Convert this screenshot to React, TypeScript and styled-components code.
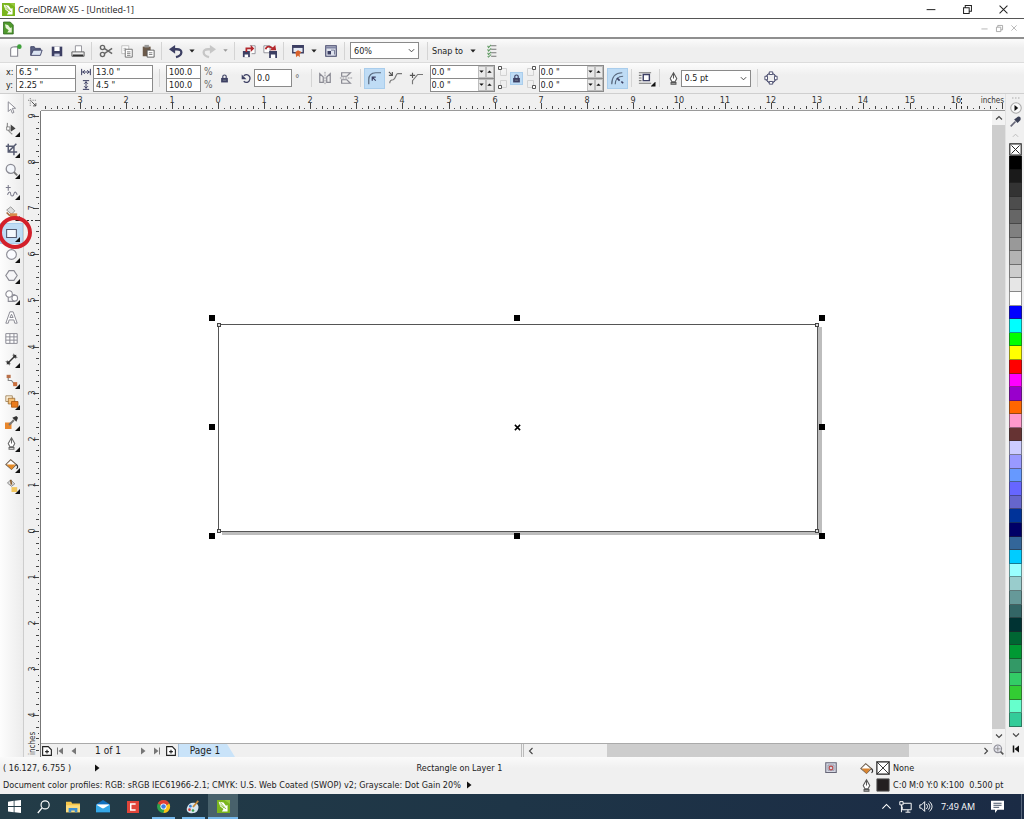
import React from "react";
import styled, { createGlobalStyle, css } from "styled-components";

const GlobalStyle = createGlobalStyle`
  * { box-sizing: border-box; }
  html, body { margin: 0; padding: 0; }
  body, button, input, select {
    font-family: "DejaVu Sans Condensed", "Noto Sans", "Liberation Sans", sans-serif;
    font-size: 9px;
    color: #222;
  }
  button { padding: 0; border: 0; background: none; }
`;

const INCH = 46.1;
const NAVY = "#3c3f63";
const GREY = "#8b8b94";

/* ---------- shared parts ---------- */

const Window = styled.div`
  display: flex;
  flex-direction: column;
  min-height: 100vh;
  background: #f0f0f0;
`;

const Glyph = styled.svg<{ $size?: number }>`
  display: block;
  flex: none;
  width: ${(p) => p.$size ?? 14}px;
  height: ${(p) => p.$size ?? 14}px;
  overflow: visible;
`;

type IconProps = { size?: number; children: React.ReactNode };
const Icon = ({ size, children }: IconProps) => (
  <Glyph $size={size} viewBox="0 0 16 16" fill="none" aria-hidden="true">
    {children}
  </Glyph>
);

const ToolButton = styled.button<{ $w?: number; $h?: number; $active?: boolean }>`
  position: relative;
  display: flex;
  flex: none;
  align-items: center;
  justify-content: center;
  width: ${(p) => p.$w ?? 21}px;
  height: ${(p) => p.$h ?? 21}px;
  ${(p) =>
    p.$active &&
    css`
      background: #bfdcf5;
      box-shadow: inset 0 0 0 1px #a9cdec;
    `}
`;

const Separator = styled.span<{ $w?: number }>`
  flex: none;
  width: 1px;
  height: 18px;
  margin: 0 ${(p) => p.$w ?? 3}px;
  background: #d4d4d4;
`;

const Caret = () => (
  <Icon size={6}>
    <path d="M1 4h14l-7 8z" fill="#222" />
  </Icon>
);

/* ---------- title and menu bars ---------- */

const TitleBar = styled.header`
  display: flex;
  align-items: center;
  height: 19px;
  padding: 0 16px 0 2px;
  gap: 3px;
  background: #fff;
  border-bottom: 1px solid #555;
`;

const Title = styled.h1`
  flex: 1;
  margin: 0;
  font-family: "Open Sans", "Noto Sans", sans-serif;
  font-size: 9px;
  font-weight: 400;
`;

const MenuBar = styled.div`
  display: flex;
  align-items: center;
  justify-content: space-between;
  height: 20px;
  padding: 0 7px 0 2px;
  background: #fff;
  border-bottom: 2px solid #8f8f8f;
`;

const WindowButtons = styled.div<{ $gap: number }>`
  display: flex;
  gap: ${(p) => p.$gap}px;
`;

const CorelLogo = ({ size }: { size: number }) => (
  <Icon size={size}>
    <path d="M0 0h16v16H0z" fill="#7ab51d" />
    <path d="M0 0h16v5L9 0z" fill="#97c93d" />
    <path d="M2 2l6 1 3 4 2-1v8H6l2-3-4-3z" fill="#fff" />
    <path d="M4 3l7 8M4 6l5 4" stroke="#7ab51d" />
  </Icon>
);

const DocLogo = () => (
  <Icon size={12}>
    <path d="M2 0h9l4 4v12H2z" fill="#4f9a2c" stroke="#2f6420" />
    <path d="M4 3l4 1 3 4 2-1v7H7l2-3-4-3z" fill="#e9f5d8" />
  </Icon>
);

const MinGlyph = ({ c = "#222", size = 10 }) => (
  <Icon size={size}><path d="M1 9h14" stroke={c} strokeWidth="1.6" /></Icon>
);
const RestoreGlyph = ({ c = "#222", size = 9 }) => (
  <Icon size={size}><path d="M1 5h10v10H1zM4 5V1h11v10h-4" stroke={c} strokeWidth="1.8" /></Icon>
);
const CloseGlyph = ({ c = "#222", size = 9 }) => (
  <Icon size={size}><path d="M1 1l14 14M15 1L1 15" stroke={c} strokeWidth="1.8" /></Icon>
);

/* ---------- standard toolbar ---------- */

const Toolbar = styled.div`
  display: flex;
  align-items: center;
  height: 24px;
  padding-left: 4px;
  background: linear-gradient(#fbfbfb, #efefef 40%);
  border-bottom: 1px solid #dcdcdc;
`;

const SelectBox = styled.div<{ $w: number }>`
  position: relative;
  flex: none;
  width: ${(p) => p.$w}px;
  select {
    display: block;
    width: 100%;
    height: 17px;
    padding: 0 3px;
    border: 1px solid #8a8a8a;
    border-radius: 0;
    background: #fff;
    appearance: none;
  }
  svg {
    position: absolute;
    top: 5px;
    right: 4px;
    pointer-events: none;
  }
`;

const Chevron = ({ turn = 0, size = 7, c = "#444" }) => (
  <Icon size={size}>
    <path d="M2 5l6 6 6-6" stroke={c} strokeWidth="2.2" transform={`rotate(${turn} 8 8)`} />
  </Icon>
);

const Select = ({ w, label, value }: { w: number; label: string; value: string }) => (
  <SelectBox $w={w}>
    <select aria-label={label} defaultValue={value}>
      <option>{value}</option>
    </select>
    <Chevron />
  </SelectBox>
);

const ZoomSlot = styled.div`
  margin: 0 5px 0 2px;
`;

const SnapButton = styled.button`
  display: flex;
  align-items: center;
  gap: 7px;
  margin: 0 5px 0 1px;
`;

const StandardToolbar = () => (
  <Toolbar role="toolbar" aria-label="Standard">
    <ToolButton aria-label="New">
      <Icon><path d="M3 14V6c0-3 4-3 8-3v11z" stroke={GREY} strokeWidth="1.3" fill="#fff" /><circle cx="13" cy="3" r="2.6" fill="#3fa13a" /></Icon>
    </ToolButton>
    <ToolButton aria-label="Open">
      <Icon><path d="M2 13V3h4l1 2h6v2" fill="#5d6485" stroke={NAVY} /><path d="M2 13l3-6h10l-2 6z" fill="#dbe4f2" stroke={NAVY} /></Icon>
    </ToolButton>
    <ToolButton aria-label="Save">
      <Icon><path d="M2 3h12v11H2z" fill={NAVY} /><path d="M5 3h6v5H5z" fill="#fff" /><path d="M5 11h6v3H5z" fill="#c7cce0" /></Icon>
    </ToolButton>
    <ToolButton aria-label="Print">
      <Icon><path d="M5 9V2h7v7" fill="#fff" stroke={GREY} /><path d="M1 9h14v5H1z" fill="#eee" stroke="#555" /><path d="M2 13h12" stroke="#333" strokeWidth="2" /></Icon>
    </ToolButton>
    <Separator />
    <ToolButton aria-label="Cut">
      <Icon><circle cx="4" cy="4" r="2.4" stroke="#666" strokeWidth="1.6" /><circle cx="4" cy="12" r="2.4" stroke="#666" strokeWidth="1.6" /><path d="M6 5l9 6M6 11l9-6" stroke="#666" strokeWidth="1.6" /></Icon>
    </ToolButton>
    <ToolButton aria-label="Copy">
      <Icon><path d="M2 2h8v9H2z" fill="#fff" stroke="#bbb" /><path d="M4 5h3M4 7h2" stroke="#aaa" /><path d="M6 6h8v9H6z" fill="#fff" stroke="#666" /><path d="M8 9h4M8 11h4M8 13h4" stroke="#777" /></Icon>
    </ToolButton>
    <ToolButton aria-label="Paste">
      <Icon><path d="M2 3h9v11H2z" fill="#6b5a4a" /><path d="M4 1h5v3H4z" fill="#999" /><path d="M7 7h8v8H7z" fill="#fff" stroke="#555" /><path d="M9 10h4M9 12h4" stroke="#777" /></Icon>
    </ToolButton>
    <Separator />
    <ToolButton aria-label="Undo">
      <Icon><path d="M8 15c8-2 8-9 1-9H4" stroke={NAVY} strokeWidth="2.6" /><path d="M7 1v10L0 6z" fill={NAVY} /></Icon>
    </ToolButton>
    <ToolButton $w={12} aria-label="Undo list"><Caret /></ToolButton>
    <ToolButton aria-label="Redo">
      <Icon><path d="M8 15C0 13 0 6 7 6h5" stroke="#c6c6c6" strokeWidth="2.6" /><path d="M9 1v10l7-5z" fill="#c6c6c6" /></Icon>
    </ToolButton>
    <ToolButton $w={12} aria-label="Redo list">
      <Icon size={5}><path d="M1 4h14l-7 8z" fill="#999" /></Icon>
    </ToolButton>
    <Separator />
    <ToolButton aria-label="Import">
      <Icon><path d="M9 2h6v9h-4" fill="#fff" stroke={GREY} /><path d="M1 8h8v7H1z" fill={NAVY} /><path d="M3 12h4v3H3z" fill="#fff" /><path d="M5 9V5h6" stroke="#b3282d" strokeWidth="2" /><path d="M10 1v8l4-4z" fill="#b3282d" /></Icon>
    </ToolButton>
    <ToolButton aria-label="Export">
      <Icon><path d="M1 2h7v8H1z" fill="#fff" stroke={GREY} /><path d="M7 8h9v8H7z" fill={NAVY} /><path d="M9 12h5v4H9z" fill="#fff" /><path d="M3 6c1-4 5-4 8-1" stroke="#b3282d" strokeWidth="2" /><path d="M8 7h7l-1-6z" fill="#b3282d" /></Icon>
    </ToolButton>
    <Separator />
    <ToolButton aria-label="Application launcher">
      <Icon><path d="M2 2h12v8H2z" fill="#e6ebf5" stroke={NAVY} strokeWidth="1.6" /><path d="M2 3h12" stroke={NAVY} strokeWidth="3" /><path d="M5 9l3-2 4 2-2 2v4l-2-2-2 2z" fill="#d9622b" /></Icon>
    </ToolButton>
    <ToolButton $w={12} aria-label="Launcher list"><Caret /></ToolButton>
    <ToolButton aria-label="Welcome screen">
      <Icon><path d="M2 2h12v12H2z" fill="#dfe3ee" stroke={NAVY} strokeWidth="1.2" /><path d="M2 4h12" stroke="#8287a5" strokeWidth="2.4" /><path d="M4 8h4v4H4z" fill={NAVY} /><path d="M8 7h4v5" stroke="#6d7290" /></Icon>
    </ToolButton>
    <Separator />
    <ZoomSlot><Select w={69} label="Zoom level" value="60%" /></ZoomSlot>
    <Separator />
    <SnapButton>Snap to <Caret /></SnapButton>
    <ToolButton aria-label="Options">
      <Icon><path d="M7 2h6M7 6h6M7 10h6M7 14h6" stroke="#777" strokeWidth="1.3" /><path d="M3 2l1 2 3-3M3 6l1 2 3-3M3 10l1 2 3-3M3 14l1 1 3-3" stroke="#5f9a62" strokeWidth="1.2" /></Icon>
    </ToolButton>
  </Toolbar>
);

/* ---------- property bar ---------- */

const PropertyBar = styled.div`
  display: flex;
  align-items: center;
  height: 31px;
  padding-left: 6px;
  background: linear-gradient(#fcfcfc, #efefef 40%);
  border-bottom: 1px solid #cfcfcf;
`;

const PairGrid = styled.div<{ $lead: number; $field: number; $tail?: number }>`
  display: grid;
  flex: none;
  grid-template-columns: ${(p) => p.$lead}px ${(p) => p.$field}px ${(p) => p.$tail ?? 0}px;
  grid-auto-rows: 13px;
  align-items: center;
  label { display: contents; }
`;

const Field = styled.input<{ $h?: number }>`
  width: 100%;
  height: ${(p) => p.$h ?? 14}px;
  padding: 0 2px;
  border: 1px solid #8a8a8a;
  border-radius: 0;
  background: #fff;
`;

const Unit = styled.span`
  padding-left: 3px;
  font-size: 10px;
  color: #666;
`;

const SpinStack = styled.div`
  display: grid;
  flex: none;
  width: 65px;
  grid-auto-rows: 12px;
  border: 1px solid #8a8a8a;
  background: #8a8a8a;
  gap: 1px;
`;

const SpinRow = styled.div`
  display: grid;
  grid-template-columns: 1fr 8px 8px;
  background: #fff;
  input {
    width: 100%;
    min-width: 0;
    height: 12px;
    padding: 0 1px;
    border: 0;
    background: transparent;
  }
  button {
    display: flex;
    align-items: center;
    justify-content: center;
    background: #e9e9e9;
    box-shadow: inset 0 0 0 1px #bdbdbd;
  }
`;

const Spinner = ({ label }: { label: string }) => (
  <SpinRow>
    <input aria-label={label} defaultValue={'0.0 "'} />
    <button aria-label={`Decrease ${label}`}><Icon size={5}><path d="M1 5h14l-7 7z" fill="#111" /></Icon></button>
    <button aria-label={`Increase ${label}`}><Icon size={5}><path d="M1 12h14L8 5z" fill="#111" /></Icon></button>
  </SpinRow>
);

const Gap = styled.span<{ $w: number }>`
  flex: none;
  width: ${(p) => p.$w}px;
`;

const DegreeBox = styled.div`
  flex: none;
  width: 38px;
`;

const LockGlyph = ({ size = 10 }) => (
  <Icon size={size}><path d="M5 8V4c0-3 6-3 6 0v4" stroke={NAVY} strokeWidth="2" /><path d="M2 7h12v8H2z" fill={NAVY} /><path d="M5 11h6" stroke="#9aa" strokeWidth="1" /></Icon>
);

const CornerGlyph = styled.svg`
  display: block;
  flex: none;
  width: 10px;
  height: 26px;
`;

const FlyMark = styled.span<{ $inset?: number }>`
  position: absolute;
  right: ${(p) => p.$inset ?? 0}px;
  bottom: 2px;
  width: 5px;
  height: 5px;
  background: #111;
  clip-path: polygon(100% 0, 100% 100%, 0 100%);
`;

const PenGlyph = () => (
  <Icon size={13}><path d="M8 1l4 7-2 4H6L4 8z" fill="#fff" stroke="#555" strokeWidth="1.3" /><path d="M8 2v6M5 13h6v2H5z" stroke="#555" strokeWidth="1.3" fill="#aaa" /></Icon>
);

const ObjectProperties = () => (
  <PropertyBar role="toolbar" aria-label="Property bar">
    <PairGrid $lead={10} $field={60}>
      <label><span>x:</span><Field defaultValue={'6.5 "'} /><i /></label>
      <label><span>y:</span><Field defaultValue={'2.25 "'} /><i /></label>
    </PairGrid>
    <Gap $w={5} />
    <PairGrid $lead={12} $field={60}>
      <Icon size={10}><path d="M1 3v10M15 3v10M2 8h12M6 5L3 8l3 3M10 5l3 3-3 3" stroke={NAVY} strokeWidth="1.6" /></Icon>
      <Field aria-label="Width" defaultValue={'13.0 "'} /><i />
      <Icon size={10}><path d="M3 1h10M3 15h10M8 2v12M5 6l3-3 3 3M5 10l3 3 3-3" stroke={NAVY} strokeWidth="1.6" /></Icon>
      <Field aria-label="Height" defaultValue={'4.5 "'} /><i />
    </PairGrid>
    <Separator $w={6} />
    <PairGrid $lead={0} $field={35} $tail={14}>
      <i /><Field aria-label="Horizontal scale" defaultValue="100.0" /><Unit>%</Unit>
      <i /><Field aria-label="Vertical scale" defaultValue="100.0" /><Unit>%</Unit>
    </PairGrid>
    <ToolButton $w={19} aria-label="Lock ratio"><LockGlyph size={9} /></ToolButton>
    <Gap $w={7} />
    <Icon size={11}><path d="M4 4c5-4 10 0 9 5s-6 6-9 3" stroke={NAVY} strokeWidth="1.8" /><path d="M1 2v7h7z" fill={NAVY} /></Icon>
    <Gap $w={2} />
    <DegreeBox><Field $h={18} aria-label="Angle of rotation" defaultValue="0.0" /></DegreeBox>
    <Unit>°</Unit>
    <Gap $w={8} />
    <Separator />
    <ToolButton aria-label="Mirror horizontally">
      <Icon><path d="M8 1v14" stroke={GREY} strokeDasharray="2 1" /><path d="M2 3l4 4v6H2zM14 3l-4 4v6h4z" stroke={GREY} strokeWidth="1.4" /></Icon>
    </ToolButton>
    <ToolButton aria-label="Mirror vertically">
      <Icon><path d="M1 8h14" stroke={GREY} strokeDasharray="2 1" /><path d="M3 2h10l-4 4H3zM3 14h10l-4-4H3z" stroke={GREY} strokeWidth="1.4" /></Icon>
    </ToolButton>
    <Separator />
    <ToolButton $active aria-label="Round corner">
      <Icon><path d="M2 15V10C2 5 5 2 10 2h6" stroke="#5b6b80" strokeWidth="1.4" /><path d="M10 11L6 7M6 11V7h4" stroke={NAVY} strokeWidth="1.4" /></Icon>
    </ToolButton>
    <ToolButton aria-label="Scalloped corner">
      <Icon><path d="M2 14c0-3 1-4 4-4 3-1 3-7 5-7h5" stroke="#777" strokeWidth="1.3" /><path d="M1 1l4 4M5 1v4H1" stroke="#555" strokeWidth="1.3" /></Icon>
    </ToolButton>
    <ToolButton aria-label="Chamfered corner">
      <Icon><path d="M4 15V11l6-7h6" stroke="#777" strokeWidth="1.3" /><path d="M4 2v6M1 5h6" stroke="#555" strokeWidth="1.3" /></Icon>
    </ToolButton>
    <Gap $w={3} />
    <SpinStack><Spinner label="top left radius" /><Spinner label="bottom left radius" /></SpinStack>
    <Gap $w={2} />
    <CornerGlyph viewBox="0 0 10 26" fill="none" aria-hidden="true">
      <path d="M3.500 3.500h6v7h-6zM3.500 15.500h6v7h-6z" stroke="#d2d2d2" />
      <path d="M1.500 1.500h3v3h-3zM1.500 20.500h3v3h-3z" stroke="#555" fill="#fff" />
    </CornerGlyph>
    <Gap $w={3} />
    <ToolButton $w={13} $h={13} $active aria-label="Edit corners together"><LockGlyph size={9} /></ToolButton>
    <Gap $w={4} />
    <CornerGlyph viewBox="0 0 10 26" fill="none" aria-hidden="true">
      <path d="M.5 3.500h6v7h-6zM.5 15.500h6v7h-6z" stroke="#d2d2d2" />
      <path d="M5.500 1.500h3v3h-3zM5.500 20.500h3v3h-3z" stroke="#555" fill="#fff" />
    </CornerGlyph>
    <Gap $w={2} />
    <SpinStack><Spinner label="top right radius" /><Spinner label="bottom right radius" /></SpinStack>
    <Gap $w={3} />
    <ToolButton $active aria-label="Relative corner scaling">
      <Icon><path d="M2 15C2 7 6 2 14 2M6 15c0-5 3-9 9-9" stroke="#5b6b80" strokeWidth="1.4" /><path d="M8 8l3 3M13 12l2 2" stroke={NAVY} strokeWidth="2" /></Icon>
    </ToolButton>
    <Separator />
    <ToolButton aria-label="Wrap text">
      <Icon><path d="M1 2h14M1 5h3M1 8h3M1 11h3M1 14h14" stroke="#777" strokeWidth="1.4" /><path d="M6 4h7v7H6z" stroke={NAVY} strokeWidth="1.6" fill="#fff" /></Icon>
      <FlyMark />
    </ToolButton>
    <Separator />
    <Gap $w={4} />
    <PenGlyph />
    <Gap $w={1} />
    <Select w={70} label="Outline width" value="0.5 pt" />
    <Gap $w={3} />
    <Separator />
    <ToolButton aria-label="Convert to curves">
      <Icon><circle cx="8" cy="8" r="5.5" stroke={NAVY} strokeWidth="1.2" /><path d="M6 1h4v3H6zM6 12h4v3H6zM1 6h3v4H1zM12 6h3v4h-3z" fill="#fff" stroke={NAVY} /></Icon>
    </ToolButton>
  </PropertyBar>
);

/* ---------- toolbox ---------- */

const Body = styled.main`
  display: flex;
  flex: 1;
  min-height: 0;
`;

const Toolbox = styled.nav`
  display: flex;
  flex: none;
  flex-direction: column;
  width: 24px;
  padding-top: 3px;
  background: linear-gradient(90deg, #fdfdfd, #ececec);
  border-right: 1px solid #cdcdcd;
`;

const RedRing = styled.span`
  position: absolute;
  z-index: 2;
  top: -7px;
  left: -2px;
  width: 34px;
  height: 33px;
  border: 4px solid #d3202b;
  border-radius: 50%;
`;

const tools: { name: string; fly?: boolean; art: React.ReactNode }[] = [
  { name: "Pick", art: <path d="M4 1v12l3-3 2 5 2-1-2-5h4z" fill="#fff" stroke={GREY} strokeWidth="1.2" /> },
  { name: "Shape", fly: true, art: <><path d="M3 1c-1 6 1 11 6 14" stroke="#8c8c8c" strokeWidth="1.4" /><path d="M2 6h4v4H2z" fill="#fff" stroke="#777" /><path d="M7 3v9l6-4z" fill="#444" /></> },
  { name: "Crop", fly: true, art: <path d="M4 1v10h11M1 4h10v11M14 1L5 10" stroke="#555a70" strokeWidth="1.8" /> },
  { name: "Zoom", fly: true, art: <><circle cx="7" cy="6" r="5.500" fill="#f3f6fb" stroke={GREY} strokeWidth="1.6" /><path d="M11 10l4 4" stroke="#777" strokeWidth="2.4" /></> },
  { name: "Freehand", fly: true, art: <path d="M4 0v7M1 3h6M3 12c2-5 4-4 4-1s3 4 4 0 3-2 4 1" stroke="#7c7c8c" strokeWidth="1.3" /> },
  { name: "Smart fill", fly: true, art: <><path d="M2 5l5-4 5 5-4 4z" fill="#ddd" stroke="#888" /><path d="M6 9h9v6H6z" fill="#d98b4c" /><path d="M2 8l4 4" stroke="#a1643a" strokeWidth="2" /></> },
  { name: "Rectangle", fly: true, art: <path d="M2 3h12v10H2z" fill="#f4f8fd" stroke="#555a70" strokeWidth="1.3" /> },
  { name: "Ellipse", fly: true, art: <circle cx="8" cy="8" r="6" fill="#fafbff" stroke={GREY} strokeWidth="1.4" /> },
  { name: "Polygon", fly: true, art: <path d="M5 2h6l4 6-4 6H5L1 8z" fill="#f6f6f8" stroke={GREY} strokeWidth="1.4" /> },
  { name: "Basic shapes", fly: true, art: <><path d="M4 6h8v8H4z" fill="#f6f6f8" stroke={GREY} strokeWidth="1.3" /><circle cx="5" cy="5" r="4" fill="#fff" stroke={GREY} strokeWidth="1.3" /><circle cx="12" cy="10" r="3.5" fill="#fff" stroke={GREY} strokeWidth="1.3" /></> },
  { name: "Text", art: <path d="M1 15L6 1h4l5 14h-3l-1-4H5l-1 4zM6 8h4L8 4z" fill="#fff" stroke={GREY} strokeWidth="1.2" /> },
  { name: "Table", art: <path d="M1 2h14v12H1zM1 6h14M1 10h14M6 2v12M11 2v12" fill="#fff" stroke={GREY} strokeWidth="1.2" /> },
  { name: "Dimension", fly: true, art: <><path d="M4 12l8-8" stroke="#333" strokeWidth="1.8" /><path d="M1 10l5 5M10 1l5 5" stroke="#777" strokeWidth="1.4" /><path d="M2 14l1-5 4 4zM14 2l-1 5-4-4z" fill="#333" /></> },
  { name: "Connector", fly: true, art: <><path d="M4 4v4h4l4 5" stroke="#888" strokeWidth="1.4" /><path d="M2 1h5v4H2z" fill="#b9704a" /><path d="M10 10h5v5h-5z" fill="#c96e3c" /></> },
  { name: "Blend", fly: true, art: <><path d="M1 1h8v7H1z" fill="#fff4df" stroke="#9a7b50" /><path d="M4 4h8v7H4z" fill="#f5c27a" stroke="#9a6a30" /><path d="M8 8h8v7H8z" fill="#e97b1c" stroke="#a9540c" /></> },
  { name: "Eyedropper", fly: true, art: <><path d="M0 8h8v8H0z" fill="#e8872d" /><path d="M5 11l6-6" stroke="#777" strokeWidth="2.4" /><path d="M9 2l5 5 2-5-2-2z" fill="#333" /></> },
  { name: "Outline", fly: true, art: <><path d="M8 1l4 7-2 4H6L4 8z" fill="#fff" stroke="#666" strokeWidth="1.3" /><path d="M8 2v6M5 13h6v2H5z" stroke="#666" strokeWidth="1.3" /></> },
  { name: "Fill", fly: true, art: <><path d="M1 8l6-6 7 6-6 6z" fill="#fff" stroke="#6b5a4a" strokeWidth="1.3" /><path d="M2 8h11l-5 6z" fill="#e58a25" /><path d="M14 8c3 3 1 5 0 5" stroke="#333" strokeWidth="1.5" /></> },
  { name: "Interactive fill", fly: true, art: <><path d="M3 5l4-4 5 5-4 3z" fill="#ddd" stroke="#777" /><path d="M7 1l1 6" stroke="#8a5c2c" strokeWidth="2" /><path d="M8 10h7v6H8z" fill="#f2c65d" /></> },
];

/* ---------- rulers and drawing area ---------- */

const WorkArea = styled.section`
  display: grid;
  flex: 1;
  min-width: 0;
  grid-template-columns: 17px 1fr 13px;
  grid-template-rows: 17px 1fr 14px;
`;

const RulerCorner = styled.div`
  display: flex;
  align-items: center;
  justify-content: center;
`;

const HorizontalRuler = styled.svg`
  grid-column: 2 / 4;
  display: block;
  width: 100%;
  height: 17px;
`;

const VerticalRuler = styled.svg`
  grid-row: 2 / 4;
  display: block;
  width: 17px;
  height: 100%;
  min-height: 0;
  contain: size;
`;

const rulerSteps = (from: number, to: number) =>
  Array.from({ length: (to - from) * 8 + 1 }, (_, i) => from * 8 + i);

const tickLength = (n: number) => (n % 8 === 0 ? 6 : n % 2 === 0 ? 3 : 1);

const TopRuler = () => (
  <HorizontalRuler aria-hidden="true">
    <svg x="50%" overflow="visible">
      {rulerSteps(-4, 17).map((n) => {
        const x = Math.round((n / 8) * INCH) - 305;
        return (
          <g key={n}>
            <rect x={x} y={15 - tickLength(n)} width="1" height={tickLength(n)} fill="#444" />
            {n % 8 === 0 && n > -32 && n < 130 && (
              <text x={x} y="9" textAnchor="middle" fontSize="9" fill="#333">{Math.abs(n / 8)}</text>
            )}
          </g>
        );
      })}
      <path d="M438.500 4v12" stroke="#333" strokeDasharray="2 2" />
    </svg>
    <text x="100%" dx="-1" y="9" textAnchor="end" fontSize="8" fill="#333">inches</text>
    <rect y="16" width="100%" height="1" fill="#9a9a9a" />
  </HorizontalRuler>
);

const SideRuler = () => (
  <VerticalRuler aria-hidden="true">
    <svg y="50%" overflow="visible">
      {rulerSteps(-5, 9).map((n) => {
        const y = 97 - Math.round((n / 8) * INCH);
        return (
          <g key={n}>
            {n > -39 && <rect x={15 - tickLength(n)} y={y} width={tickLength(n)} height="1" fill="#444" />}
            {n % 8 === 0 && n > -40 && (
              <text transform={`translate(11 ${y}) rotate(-90)`} textAnchor="middle" fontSize="9" fill="#333">
                {Math.abs(n / 8)}
              </text>
            )}
          </g>
        );
      })}
      <path d="M3 -213.500h13" stroke="#333" strokeDasharray="2 2" />
    </svg>
    <svg y="100%" overflow="visible">
      <text transform="translate(11 -2) rotate(-90)" fontSize="8" fill="#333">inches</text>
    </svg>
    <rect x="16" width="1" height="100%" fill="#777" />
  </VerticalRuler>
);

const Canvas = styled.div`
  display: flex;
  align-items: center;
  justify-content: center;
  padding: 2px 0 0 2px;
  background: #fff;
`;

const Page = styled.div`
  position: relative;
  width: 600px;
  height: 208px;
  border: 1px solid #555;
  background: #fff;
  box-shadow: 4px 3px 0 #bdbdbd;
`;

const Handle = styled.span<{ $x: string; $y: string }>`
  position: absolute;
  left: ${(p) => p.$x};
  top: ${(p) => p.$y};
  width: 6px;
  height: 6px;
  margin: -3px;
  background: #000;
`;

const Node = styled.span<{ $x: string; $y: string }>`
  position: absolute;
  left: ${(p) => p.$x};
  top: ${(p) => p.$y};
  width: 4px;
  height: 4px;
  margin: -2px;
  border: 1px solid #444;
  background: #ddd;
`;

const PageCenter = styled.div`
  position: absolute;
  top: calc(50% - 4px);
  left: calc(50% - 4px);
`;

const xStops = ["-7px", "calc(50% - 1px)", "calc(100% + 5px)"];
const yStops = ["-7px", "calc(50% - 1px)", "calc(100% + 5px)"];
const ends = ["0%", "100%"];

const VScroll = styled.div`
  display: flex;
  flex-direction: column;
  background: #cdcdcd;
  button {
    display: flex;
    align-items: center;
    justify-content: center;
    height: 14px;
    background: #f2f2f2;
  }
`;

const Thumb = styled.div`
  flex: 1;
  background: #cdcdcd;
`;

const BottomBar = styled.div`
  display: grid;
  grid-template-columns: 483fr 468fr;
  border-top: 1px solid #aaa;
  background: #f0f0f0;
`;

const PageNav = styled.div`
  display: flex;
  align-items: center;
  border-right: 3px double #bbb;
`;

const NavButton = styled.button<{ $w: number }>`
  display: flex;
  flex: none;
  align-items: center;
  justify-content: center;
  width: ${(p) => p.$w}px;
  height: 13px;
`;

const PageCount = styled.span`
  flex: none;
  width: 54px;
  font-size: 10px;
  text-align: center;
`;

const PageTab = styled.button`
  flex: none;
  width: 57px;
  height: 13px;
  padding-right: 4px;
  font-size: 10px;
  background: #c9e3f9;
  border-left: 1px solid #a5bfd8;
  clip-path: polygon(0 0, 86% 0, 100% 100%, 0 100%);
`;

const HScroll = styled.div`
  display: flex;
  align-items: center;
  justify-content: space-between;
  button {
    display: flex;
    align-items: center;
    justify-content: center;
    width: 13px;
    height: 13px;
  }
`;

const HTrack = styled.div`
  display: grid;
  flex: 1;
  grid-template-columns: 3fr 13fr 3fr;
`;

const HThumb = styled.div`
  grid-column: 2;
  height: 13px;
  background: #cdcdcd;
`;

const AddPage = () => (
  <Icon size={10}><path d="M1 1h9l5 5v9H1zM5 9h6M8 6v6" stroke="#222" strokeWidth="1.8" fill="#fff" /></Icon>
);

/* ---------- colour palette ---------- */

const Palette = styled.aside`
  display: flex;
  flex: none;
  flex-direction: column;
  align-items: center;
  width: 19px;
  padding: 2px 2px 2px 3px;
  border-left: 1px solid #e2e2e2;
`;

const PaletteButton = styled.button<{ $h: number }>`
  display: flex;
  flex: none;
  align-items: center;
  justify-content: center;
  width: 13px;
  height: ${(p) => p.$h}px;
`;

const Swatches = styled.div`
  display: flex;
  flex: 1;
  flex-direction: column;
  align-self: stretch;
`;

const Swatch = styled.button<{ $c: string }>`
  flex: 1;
  min-height: 0;
  background: ${(p) => p.$c};
  border: 1px solid rgba(40, 40, 40, 0.5);
  border-top: 0;
`;

const colors = [
  "#000000", "#1a1a1a", "#333333", "#4d4d4d", "#666666", "#808080", "#999999",
  "#b3b3b3", "#cccccc", "#e6e6e6", "#ffffff", "#0000ff", "#00ffff", "#00ff00",
  "#ffff00", "#ff0000", "#ff00ff", "#9900cc", "#ff6600", "#ff99cc", "#663333",
  "#ccccff", "#9999ff", "#6699ff", "#6666ff", "#6666cc", "#003399", "#000066",
  "#336699", "#00ccff", "#99ffff", "#99cccc", "#669999", "#336666", "#003333",
  "#006633", "#009933", "#339966", "#33cc66", "#33cc33", "#66ffcc", "#33cc99",
];

/* ---------- status bar ---------- */

const StatusBar = styled.footer`
  display: grid;
  grid-template-columns: 1fr 200px;
  grid-template-rows: 18px 16px;
  align-items: center;
  padding: 2px 0 1px 3px;
  background: linear-gradient(#fafafa, #f0f0f0 30%);
`;

const StatusLine = styled.div`
  display: grid;
  grid-template-columns: 92px 1fr;
  align-items: center;
`;

const ObjectInfo = styled.span`
  text-align: center;
`;

const Expandable = styled.span<{ $gap: number }>`
  display: flex;
  align-items: center;
  gap: ${(p) => p.$gap}px;
  white-space: nowrap;
`;

const StatusFill = styled.div<{ $pad: number }>`
  display: flex;
  align-items: center;
  padding-left: ${(p) => p.$pad}px;
  gap: 3px;
  white-space: pre;
`;

const StatusGap = styled.span`
  width: 17px;
`;

const Play = () => (
  <Icon size={8}><path d="M4 1v14l9-7z" fill="#111" /></Icon>
);

/* ---------- taskbar ---------- */

const Taskbar = styled.div`
  display: flex;
  align-items: stretch;
  height: 25px;
  background: linear-gradient(90deg, #233c47, #1e3547 50%, #1b2b45);
`;

const Task = styled.button<{ $w?: number; $open?: boolean; $active?: boolean }>`
  display: flex;
  flex: none;
  align-items: center;
  justify-content: center;
  width: ${(p) => p.$w ?? 30}px;
  ${(p) => p.$open && css`
    background: linear-gradient(#76b9ed, #76b9ed) center bottom / 23px 2px no-repeat;
  `}
  ${(p) => p.$active && css`
    background: linear-gradient(#76b9ed, #76b9ed) center bottom / 30px 2px no-repeat, #48616b;
  `}
`;

const Tray = styled.div`
  display: flex;
  align-items: center;
  gap: 7px;
  margin-left: auto;
  padding-right: 2px;
`;

const Clock = styled.time`
  margin: 0 9px 0 2px;
  font-family: "Open Sans", "Noto Sans", sans-serif;
  color: #fff;
`;

const ShowDesktop = styled.span`
  width: 1px;
  height: 25px;
  margin-left: 10px;
  background: #56657a;
`;

export default function App() {
  return (
    <Window>
      <GlobalStyle />
      <TitleBar>
        <CorelLogo size={13} />
        <Title>CorelDRAW X5 - [Untitled-1]</Title>
        <WindowButtons $gap={27}>
          <button aria-label="Minimize"><MinGlyph /></button>
          <button aria-label="Restore"><RestoreGlyph /></button>
          <button aria-label="Close"><CloseGlyph /></button>
        </WindowButtons>
      </TitleBar>
      <MenuBar>
        <DocLogo />
        <WindowButtons $gap={8}>
          <button aria-label="Minimize document"><MinGlyph c="#999" size={7} /></button>
          <button aria-label="Restore document"><RestoreGlyph c="#999" size={7} /></button>
          <button aria-label="Close document"><CloseGlyph c="#999" size={6} /></button>
        </WindowButtons>
      </MenuBar>
      <StandardToolbar />
      <ObjectProperties />
      <Body>
        <Toolbox aria-label="Toolbox">
          {tools.map((t) => (
            <ToolButton key={t.name} $w={23} $active={t.name === "Rectangle"} aria-label={t.name}>
              <Icon size={13}>{t.art}</Icon>
              {t.fly && <FlyMark $inset={3} />}
              {t.name === "Rectangle" && <RedRing />}
            </ToolButton>
          ))}
        </Toolbox>
        <WorkArea>
          <RulerCorner>
            <Icon size={9}><path d="M4 0v16M0 4h16" stroke="#666" strokeWidth="1.4" strokeDasharray="2 2" /><path d="M6 6l8 8M14 9v5H9" stroke="#444" strokeWidth="1.6" /></Icon>
          </RulerCorner>
          <TopRuler />
          <SideRuler />
          <Canvas>
            <Page>
              {xStops.map((x, i) =>
                yStops.map((y, j) => (i === 1 && j === 1 ? null : <Handle key={`${i}${j}`} $x={x} $y={y} />)),
              )}
              {ends.map((x) => ends.map((y) => <Node key={x + y} $x={x} $y={y} />))}
              <PageCenter>
                <Icon size={7}><path d="M2 2l12 12M14 2L2 14" stroke="#000" strokeWidth="3.4" /></Icon>
              </PageCenter>
            </Page>
          </Canvas>
          <VScroll>
            <button aria-label="Scroll up"><Chevron turn={180} size={8} /></button>
            <Thumb />
            <button aria-label="Scroll down"><Chevron size={8} /></button>
          </VScroll>
          <BottomBar>
            <PageNav>
              <NavButton $w={12} aria-label="Add page before"><AddPage /></NavButton>
              <NavButton $w={14} aria-label="First page"><Icon size={8}><path d="M3 1v14" stroke="#777" strokeWidth="2" /><path d="M14 1v14L5 8z" fill="#777" /></Icon></NavButton>
              <NavButton $w={14} aria-label="Previous page"><Icon size={8}><path d="M12 1v14L3 8z" fill="#777" /></Icon></NavButton>
              <PageCount>1 of 1</PageCount>
              <NavButton $w={15} aria-label="Next page"><Icon size={8}><path d="M4 1v14l9-7z" fill="#777" /></Icon></NavButton>
              <NavButton $w={13} aria-label="Last page"><Icon size={8}><path d="M13 1v14" stroke="#777" strokeWidth="2" /><path d="M2 1v14l9-7z" fill="#777" /></Icon></NavButton>
              <NavButton $w={15} aria-label="Add page after"><AddPage /></NavButton>
              <PageTab>Page 1</PageTab>
            </PageNav>
            <HScroll>
              <button aria-label="Scroll left"><Chevron turn={90} size={8} /></button>
              <HTrack><HThumb /></HTrack>
              <button aria-label="Scroll right"><Chevron turn={-90} size={8} /></button>
            </HScroll>
          </BottomBar>
          <NavButton $w={13} aria-label="Navigator">
            <Icon size={11}><circle cx="7" cy="7" r="5.500" fill="#e6e6ee" stroke={GREY} strokeWidth="1.6" /><path d="M7 3v8M3 7h8" stroke="#777" /><path d="M11 11l4 4" stroke="#555" strokeWidth="2.4" /></Icon>
          </NavButton>
        </WorkArea>
        <Palette aria-label="Color palette">
          <PaletteButton $h={4} aria-label="Move palette"><Icon size={8}><path d="M0 8h16" stroke="#aaa" strokeWidth="2" strokeDasharray="3 3" /></Icon></PaletteButton>
          <PaletteButton $h={15} aria-label="Palette menu"><Icon size={12}><circle cx="8" cy="8" r="7" fill="#fafafa" stroke="#aaa" strokeWidth="1.4" /><path d="M6 4v8l5-4z" fill="#111" /></Icon></PaletteButton>
          <PaletteButton $h={13} aria-label="Pick color"><Icon size={11}><path d="M1 15l7-7" stroke="#667" strokeWidth="2.4" /><path d="M6 5l5 5 4-4c2-4-2-7-5-4z" fill="#3a3f55" /></Icon></PaletteButton>
          <PaletteButton $h={14} aria-label="Palette up"><Chevron turn={180} size={7} c="#bbb" /></PaletteButton>
          <PaletteButton $h={14} aria-label="No color"><Icon size={13}><path d="M1 1h14v14H1z" fill="#fff" stroke="#222" strokeWidth="1.4" /><path d="M3 3l10 10M13 3L3 13" stroke="#222" strokeWidth="1.2" /></Icon></PaletteButton>
          <Swatches>
            {colors.map((c) => <Swatch key={c} $c={c} aria-label={c} />)}
          </Swatches>
          <PaletteButton $h={15} aria-label="Palette down"><Chevron size={8} /></PaletteButton>
          <PaletteButton $h={13} aria-label="Expand palette"><Icon size={8}><path d="M3 1v14" stroke="#111" strokeWidth="3" /><path d="M14 1v14L5 8z" fill="#111" /></Icon></PaletteButton>
        </Palette>
      </Body>
      <StatusBar>
        <StatusLine>
          <Expandable $gap={22}>( 16.127, 6.755 ) <Play /></Expandable>
          <ObjectInfo>Rectangle on Layer 1</ObjectInfo>
        </StatusLine>
        <StatusFill $pad={1}>
          <Icon size={12}><path d="M1 1h14v13H1z" fill="#d5d7e2" stroke="#667" strokeWidth="1.4" /><path d="M4 4h8v7H4z" stroke="#889" /><circle cx="8" cy="8" r="2.500" stroke="#b44" strokeWidth="1.4" /></Icon>
          <StatusGap />
          <Icon size={13}><path d="M1 8l6-6 7 6-6 6z" fill="#fff" stroke="#6b5a4a" strokeWidth="1.3" /><path d="M2 8h11l-5 6z" fill="#d98430" /><path d="M14 8c3 3 1 5 0 5" stroke="#333" strokeWidth="1.5" /></Icon>
          <Icon size={14}><path d="M1 1h14v14H1z" fill="#fff" stroke="#222" strokeWidth="1.4" /><path d="M1 1l14 14M15 1L1 15" stroke="#222" /></Icon>
          <span>None</span>
        </StatusFill>
        <Expandable $gap={4}>
          Document color profiles: RGB: sRGB IEC61966-2.1; CMYK: U.S. Web Coated (SWOP) v2; Grayscale: Dot Gain 20%
          <Play />
        </Expandable>
        <StatusFill $pad={36}>
          <PenGlyph />
          <Icon size={14}><path d="M1 1h14v14H1z" fill="#231f20" stroke="#555" /></Icon>
          <span>{"C:0 M:0 Y:0 K:100  0.500 pt"}</span>
        </StatusFill>
      </StatusBar>
      <Taskbar>
        <Task $w={28} aria-label="Start"><Icon size={13}><path d="M0 2l7-1v6.500H0zM8 1l8-1v7.500H8zM0 8.500h7V15l-7-1zM8 8.500h8V16l-8-1z" fill="#fff" /></Icon></Task>
        <Task aria-label="Search"><Icon size={13}><circle cx="10" cy="6" r="5" stroke="#fff" strokeWidth="1.4" /><path d="M6 10l-5 6" stroke="#fff" strokeWidth="1.6" /></Icon></Task>
        <Task aria-label="File Explorer"><Icon size={14}><path d="M0 2h6l1 2h9v10H0z" fill="#f7c64a" /><path d="M0 6h16v8H0z" fill="#fbdc7e" /><path d="M3 14V9h10v5h-3v-2H6v2z" fill="#3f8fd0" /></Icon></Task>
        <Task aria-label="Mail"><Icon size={14}><path d="M0 5l8-5 8 5v9H0z" fill="#1271bf" /><path d="M1 5h14v5H1z" fill="#fff" /><path d="M0 5l8 5 8-5v9H0z" fill="#35a8e8" /></Icon></Task>
        <Task aria-label="Camtasia"><Icon size={12}><path d="M0 0h16v16H0z" fill="#e0453a" /><path d="M11.500 4H5v8h6.500" stroke="#fff" strokeWidth="2" /></Icon></Task>
        <Task $open aria-label="Chrome"><Icon size={13}><circle cx="8" cy="8" r="8" fill="#2fa24d" /><path d="M1 4a8 8 0 0 1 14 0L8 8z" fill="#e23f33" /><path d="M15 4a8 8 0 0 1-7 12l2-8z" fill="#fbc116" /><path d="M1 4h14l-3 2H5z" fill="#e23f33" /><circle cx="8" cy="8" r="3.800" fill="#fff" /><circle cx="8" cy="8" r="2.800" fill="#3f7fe8" /></Icon></Task>
        <Task $open aria-label="Paint"><Icon size={14}><path d="M8 3c5 0 7 3 6 7s-4 5-7 5c-4 0-7-2-6-6s4-6 7-6z" fill="#d7e4ee" /><circle cx="5" cy="7" r="1.500" fill="#3a80d0" /><circle cx="4" cy="11" r="1.500" fill="#d03a3a" /><circle cx="8" cy="12" r="1.500" fill="#3aa050" /><path d="M8 8l6-7" stroke="#c98b3b" strokeWidth="2" /></Icon></Task>
        <Task $active aria-label="CorelDRAW"><CorelLogo size={13} /></Task>
        <Tray>
          <Icon size={11}><path d="M2 11l6-6 6 6" stroke="#fff" strokeWidth="1.6" /></Icon>
          <Icon size={13}><path d="M5 4h10v8H4V8M8 15h6M11 12v3M1 2h4v4H1zM3 6v9" stroke="#fff" strokeWidth="1.200" /></Icon>
          <Icon size={13}><path d="M1 6h2l4-4v12l-4-4H1zM9 5c2 2 2 4 0 6M11 4c3 2 3 6 0 8M13 2c4 4 4 8 0 12" stroke="#fff" strokeWidth="1.200" /></Icon>
          <Clock>7:49 AM</Clock>
          <Icon size={13}><path d="M0 1h16v11H8l-3 4v-4H0z" fill="#fff" /><path d="M3 4h10M3 6.500h10M3 9h7" stroke="#1b2b45" /></Icon>
          <ShowDesktop />
        </Tray>
      </Taskbar>
    </Window>
  );
}
